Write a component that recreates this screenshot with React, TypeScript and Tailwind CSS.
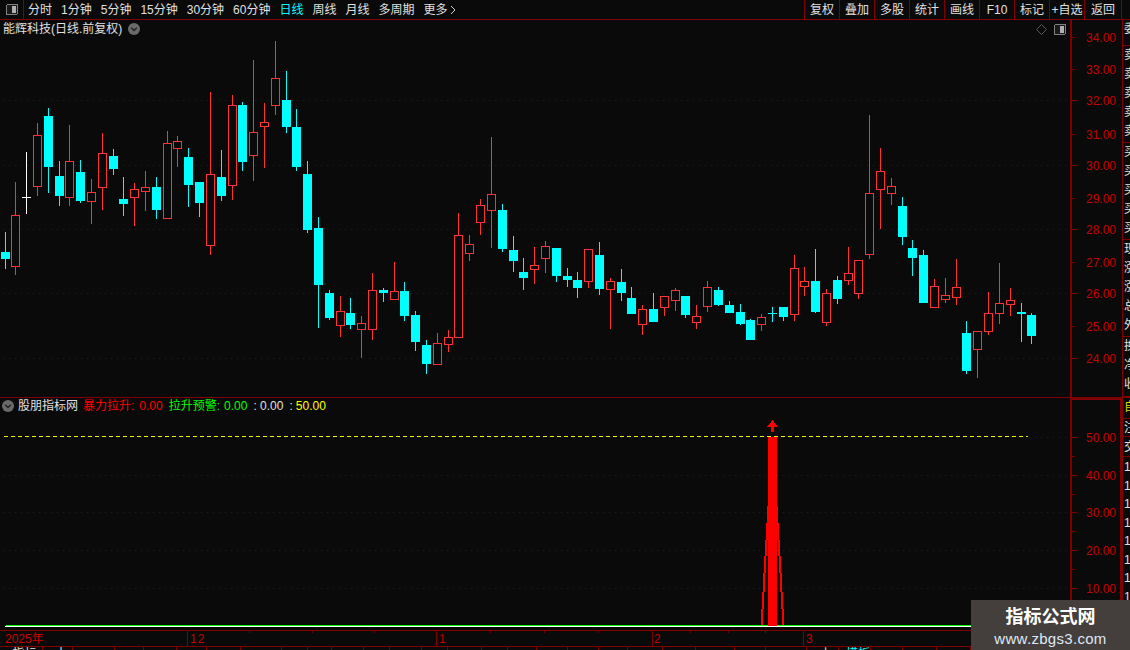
import React from "react";

const LINE = "#800000";
const RED = "#ff3333";
const CYAN = "#00ffff";
const AXIS = "#c80000";

type C = [string, number, number, number, number, number];
const candles: C[] = [
  ["c",5,232,269,252,259],["r",15,182,275,215,267],["w",26,152,214,197,198],["r",37,123,196,135,187],
  ["c",48,108,193,116,167],["c",59,161,206,176,196],["r",69,125,206,161,198],["c",80,160,203,172,201],
  ["r",91,179,224,192,202],["r",102,133,210,153,188],["c",113,149,175,156,169],["c",123,177,216,199,204],
  ["r",134,183,226,189,198],["r",145,171,211,187,192],["c",156,177,219,187,210],["r",167,131,219,143,219],
  ["r",177,136,167,141,149],["c",188,148,207,157,185],["c",199,182,217,182,203],["r",210,92,255,174,246],
  ["c",221,150,201,177,196],["r",232,95,200,105,186],["c",242,102,171,105,162],["r",253,60,181,132,156],
  ["r",264,103,168,122,127],["r",275,41,115,78,106],["c",286,71,133,100,127],["c",296,109,171,127,167],
  ["c",307,161,233,174,230],["c",318,217,328,228,285],["c",329,290,320,293,318],["r",340,296,337,311,326],
  ["c",350,298,329,313,325],["r",361,316,358,323,330],["r",372,273,340,290,330],["c",383,288,302,290,293],
  ["r",394,262,300,291,300],["c",404,282,321,291,316],["c",415,311,351,315,342],["c",426,340,374,345,364],
  ["r",437,333,365,343,365],["r",448,330,352,337,345],["r",458,213,338,235,338],["r",469,235,261,244,254],
  ["r",480,199,235,205,223],["r",491,137,248,194,211],["c",502,204,252,210,249],["c",513,236,272,250,261],
  ["c",523,258,290,272,278],["r",534,247,284,265,270],["r",545,241,273,246,259],["c",556,248,282,248,276],
  ["c",567,268,287,276,280],["c",577,272,298,280,288],["r",588,249,288,249,282],["c",599,242,295,255,289],
  ["r",610,278,329,281,290],["c",621,269,301,282,293],["c",631,287,314,298,314],["r",642,305,335,309,325],
  ["c",653,293,322,309,322],["r",664,296,316,296,308],["r",675,288,311,290,301],["c",685,296,318,296,315],
  ["r",696,305,329,316,323],["r",707,281,312,287,307],["c",718,287,306,290,305],["c",729,301,313,305,313],
  ["c",740,304,325,312,324],["c",750,319,340,320,340],["r",761,314,331,317,325],["c",772,307,322,313,314],
  ["c",783,307,321,307,317],["r",794,255,321,268,315],["r",804,267,296,281,287],["c",815,249,313,281,312],
  ["r",826,289,326,293,323],["c",837,276,304,280,299],["r",848,247,285,273,281],["r",858,260,299,260,294],
  ["r",869,115,259,193,255],["r",880,148,229,171,190],["r",891,178,205,186,194],["c",902,197,245,206,237],
  ["c",912,240,276,248,258],["c",923,250,303,255,303],["r",934,279,308,286,308],["r",945,278,303,295,300],
  ["r",956,259,305,287,298],["c",966,321,374,333,371],["r",977,331,378,331,350],["r",988,292,335,313,332],
  ["r",999,263,324,303,314],["r",1010,288,316,300,305],["c",1021,303,342,312,314],["c",1031,313,344,315,336],
];

const upperTicks: [string, number, boolean][] = [
  ["34.00",37,false],["33.00",69,false],["32.00",100,true],["31.00",134,false],["30.00",165,true],["29.00",198,false],
  ["28.00",229,true],["27.00",262,false],["26.00",293,true],["25.00",326,false],["24.00",358,true],
];
const lowerTicks: [string, number][] = [["50.00",437],["40.00",475],["30.00",512],["20.00",550],["10.00",588]];

const leftTabs = ["分时","1分钟","5分钟","15分钟","30分钟","60分钟","日线","周线","月线","多周期"];
const rightTabs = ["复权","叠加","多股","统计","画线","F10","标记","+自选"];

const stripGroups: { chars: string[]; rowClass: string; textClass?: string }[] = [
  { chars: ["委"], rowClass: "h-[26px]" },
  { chars: ["卖","卖","卖","卖","卖"], rowClass: "h-[97px]" },
  { chars: ["买","买","买","买","买"], rowClass: "h-[97px]" },
  { chars: ["现","涨","涨","总","外"], rowClass: "h-[97px]" },
  { chars: ["换","净","收"], rowClass: "h-[61px]" },
];

const bottomEdges = [43,73,115,144,177,207,241,282,308,332,364,390,422,448,482,508,537,568,599,628,663,696,735,766,807,839,871,903,937,971];

function Chevron({ className }: { className: string }) {
  return (
    <svg viewBox="0 0 12 12" className={className}>
      <circle cx="6" cy="6" r="6" fill="#6a6a6a" />
      <path d="M3.2 4.8 L6 7.6 L8.8 4.8" fill="none" stroke="#222" strokeWidth="1.4" />
    </svg>
  );
}

function PanelToggle({ className }: { className: string }) {
  return (
    <svg viewBox="0 0 12 11" className={className} shapeRendering="crispEdges">
      <rect x="0.5" y="0.5" width="11" height="10" rx="1.5" fill="#1a1a1a" stroke="#808080" />
      <rect x="6" y="2" width="4" height="7" fill="#b0b0b0" />
    </svg>
  );
}

function Candles() {
  return (
    <g shapeRendering="crispEdges">
      {candles.map(([t, x, wt, wb, bt, bb], i) => {
        const color = t === "r" ? RED : t === "c" ? CYAN : "#ffffff";
        const doji = bb - bt <= 2;
        return (
          <g key={i}>
            <rect x={x} y={wt} width={1} height={wb - wt} fill={color} />
            {t === "r" ? (
              <rect x={x - 4 + 0.5} y={bt + 0.5} width={8} height={bb - bt - 1} fill="#0a0a0a" stroke={color} />
            ) : (
              <rect x={x - 4} y={bt} width={9} height={bb - bt} fill={color} />
            )}
            {doji && null}
          </g>
        );
      })}
    </g>
  );
}

function Dotted({ y, x1 = 3, x2 = 1070 }: { y: number; x1?: number; x2?: number }) {
  return <line x1={x1} x2={x2} y1={y + 0.5} y2={y + 0.5} stroke="#6a0000" strokeDasharray="1 5" />;
}

function Spike() {
  const left: [number, number, number][] = [[761,609,625],[762,592,609],[763,573,592],[764,556,573],[765,540,556]];
  const right: [number, number, number][] = [[782,609,625],[781,592,609],[780,573,592],[779,556,573],[778,540,556]];
  return (
    <g shapeRendering="crispEdges" fill="#ff0000">
      {[...left, ...right].map(([x, a, b], i) => (
        <rect key={i} x={x} y={a} width={2} height={b - a} />
      ))}
      <rect x={768} y={437} width={9} height={189} />
      <rect x={767} y={506} width={11} height={34} />
      <rect x={766} y={523} width={13} height={17} />
      <polygon points="772.5,420 777.5,426.5 774,426.5 774,432 771,432 771,426.5 767.5,426.5" />
    </g>
  );
}

export default function App() {
  return (
    <div className="relative flex h-[650px] w-[1130px] flex-col overflow-hidden bg-[#0a0a0a] font-['Liberation_Sans','Noto_Sans_CJK_SC',sans-serif] text-[12px] text-[#e0e0e0]">
      {/* toolbar */}
      <div className="flex h-[20px] shrink-0 items-center border-b border-[#800000]">
        <div className="flex h-full w-[24px] items-center justify-center border-r border-[#800000]">
          <PanelToggle className="h-[11px] w-[12px]" />
        </div>
        <div className="ml-[4px] flex items-center gap-[9px]">
          {leftTabs.map((t) => (
            <span key={t} className={t === "日线" ? "text-[#00ffff]" : ""}>{t}</span>
          ))}
          <span className="flex items-center gap-[2px]">
            更多
            <svg viewBox="0 0 6 10" className="h-[10px] w-[6px]">
              <path d="M1 1 L5 5 L1 9" fill="none" stroke="#d0d0d0" />
            </svg>
          </span>
        </div>
        <div className="ml-auto mr-[8px] flex h-full border-r border-[#800000]">
          {rightTabs.map((t) => (
            <span key={t} className="flex h-full w-[35px] items-center justify-center whitespace-nowrap border-l border-[#800000]">{t}</span>
          ))}
          <span className="flex h-full w-[37px] items-center justify-center border-l border-[#800000]">返回</span>
        </div>
      </div>

      {/* body */}
      <div className="flex h-[610px] shrink-0">
        <div className="flex w-[1122px] shrink-0 flex-col">
          {/* upper panel */}
          <div className="flex h-[378px] border-b border-[#800000]">
            <div className="relative h-[377px] w-[1070px]">
              <svg width="1070" height="377" viewBox="0 20 1070 377" className="block">
                {upperTicks.filter((t) => t[2]).map((t) => <Dotted key={t[0]} y={t[1]} />)}
                <Candles />
              </svg>
              <div className="absolute left-[3px] top-0 flex h-[18px] items-center gap-[6px] whitespace-nowrap">
                <span>能辉科技(日线.前复权)</span>
                <Chevron className="h-[12px] w-[12px]" />
              </div>
              <div className="absolute right-[4px] top-[4px] flex items-center gap-[7px]">
                <svg viewBox="0 0 11 11" className="h-[11px] w-[11px]">
                  <polygon points="5.5,0.5 10.5,5.5 5.5,10.5 0.5,5.5" fill="none" stroke="#5a5a5a" />
                </svg>
                <PanelToggle className="h-[11px] w-[12px]" />
              </div>
            </div>
            <div className="h-[377px] w-[52px] border-l-2 border-[#800000]">
              <svg width="50" height="377" viewBox="1072 20 50 377" className="block">
                {upperTicks.map(([l, y, major]) => (
                  <g key={l}>
                    <rect x={1072} y={y} width={major ? 5 : 3} height={1} fill={LINE} shapeRendering="crispEdges" />
                    <text x={1086} y={y + 4.5} fontSize="12" fill={AXIS}>{l}</text>
                  </g>
                ))}
              </svg>
            </div>
          </div>

          {/* lower panel */}
          <div className="flex h-[232px]">
            <div className="relative h-[232px] w-[1070px]">
              <svg width="1070" height="232" viewBox="0 398 1070 232" className="block">
                {lowerTicks.map(([l, y]) => <Dotted key={l} y={y} />)}
                <line x1="4" x2="1028" y1="436.5" y2="436.5" stroke="#f0f000" strokeDasharray="4 3" />
                <rect x="6" y="625" width="1064" height="1" fill="#00ff00" shapeRendering="crispEdges" />
                <rect x="5" y="626" width="1065" height="1" fill="#ffffff" shapeRendering="crispEdges" />
                <Spike />
              </svg>
              <div className="absolute left-[2px] top-0 flex h-[16px] items-center whitespace-nowrap">
                <Chevron className="mr-[4px] h-[12px] w-[12px]" />
                <span className="mr-[5px]">股朋指标网</span>
                <span className="text-[#ff0000]">暴力拉升:</span>
                <span className="ml-[5px] text-[#ff0000]">0.00</span>
                <span className="ml-[6px] text-[#00ff00]">拉升预警:</span>
                <span className="ml-[4px] text-[#00ff00]">0.00</span>
                <span className="ml-[6px] text-[#e0e0e0]">: 0.00</span>
                <span className="ml-[6px] text-[#e0e0e0]">:</span>
                <span className="ml-[3px] text-[#ffff00]">50.00</span>
              </div>
            </div>
            <div className="h-[232px] w-[52px] border-l-2 border-r-2 border-t-2 border-[#800000]">
              <svg width="48" height="230" viewBox="1072 400 48 230" className="block">
                {lowerTicks.map(([l, y]) => (
                  <g key={l}>
                    <rect x={1072} y={y} width={5} height={1} fill={LINE} shapeRendering="crispEdges" />
                    <rect x={1072} y={y + 19} width={3} height={1} fill={LINE} shapeRendering="crispEdges" />
                    <text x={1086} y={y + 4.5} fontSize="12" fill={AXIS}>{l}</text>
                  </g>
                ))}
              </svg>
            </div>
          </div>
        </div>

        {/* right cut-off strip */}
        <div className="flex w-[8px] shrink-0 flex-col overflow-hidden border-l border-[#800000] text-[12px] leading-[19px]">
          {stripGroups.map((g, i) => (
            <div key={i} className={`${g.rowClass} shrink-0 overflow-hidden border-b border-[#800000] ${i === 4 ? "border-b-2" : ""}`}>
              {g.chars.map((c, j) => (
                <div key={j} className="h-[19px] w-[12px] pl-[1px]">{c}</div>
              ))}
            </div>
          ))}
          <div className="h-[21px] shrink-0 overflow-hidden border-b border-[#800000] text-[#d8d800]"><div className="w-[12px] pl-[1px]">自</div></div>
          <div className="h-[18px] shrink-0 overflow-hidden border-b border-[#800000]"><div className="w-[12px] pl-[1px] leading-[18px]">注</div></div>
          <div className="h-[20px] shrink-0 overflow-hidden border-b border-[#800000]"><div className="w-[12px] pl-[1px] leading-[20px]">交</div></div>
          {Array.from({ length: 9 }).map((_, i) => (
            <div key={i} className="h-[18.5px] shrink-0 pl-[1px] leading-[20px]">1</div>
          ))}
        </div>
      </div>

      {/* time axis */}
      <div className="h-[17px] shrink-0 border-y border-[#800000]">
        <svg width="1130" height="15" viewBox="0 631 1130 15" className="block">
          <g fill={LINE} shapeRendering="crispEdges">
            {[249,312,374,490,544,598,690,728,765].map((x) => <rect key={x} x={x} y={631} width={1} height={2} />)}
            {[187,436,652,803].map((x) => <rect key={x} x={x} y={631} width={1} height={15} />)}
          </g>
          <g fontSize="12" fill={AXIS}>
            <text x="5" y="643">2025年</text>
            <text x="190" y="643" letterSpacing="1">12</text>
            <text x="439" y="643">1</text>
            <text x="654" y="643">2</text>
            <text x="806" y="643">3</text>
          </g>
        </svg>
      </div>

      {/* bottom tab row, cut off by the window */}
      <div className="flex h-[3px] shrink-0 overflow-hidden leading-[14px]">
        {bottomEdges.map((x, i) => {
          const w = x - (i === 0 ? 0 : bottomEdges[i - 1]);
          const label = i === 0 ? "指标" : i === 1 ? "十" : i === 25 ? "上" : i === 26 ? "模板" : "";
          return (
            <div
              key={x}
              style={{ width: w }}
              className={`h-[14px] shrink-0 border-r border-[#800000] pl-[7px] text-center ${i === 26 ? "text-[#00ffff]" : "text-[#e0e0e0]"}`}
            >
              {label}
            </div>
          );
        })}
      </div>

      {/* watermark */}
      <div className="absolute bottom-0 right-0 flex h-[50px] w-[159px] flex-col items-center bg-[#443f3d]">
        <span className="mt-[5px] text-[18px] font-bold leading-[24px] text-white">指标公式网</span>
        <span className="text-[15px] leading-[19px] tracking-[0.3px] text-[#dfe9f5]">www.zbgs3.com</span>
      </div>
    </div>
  );
}
